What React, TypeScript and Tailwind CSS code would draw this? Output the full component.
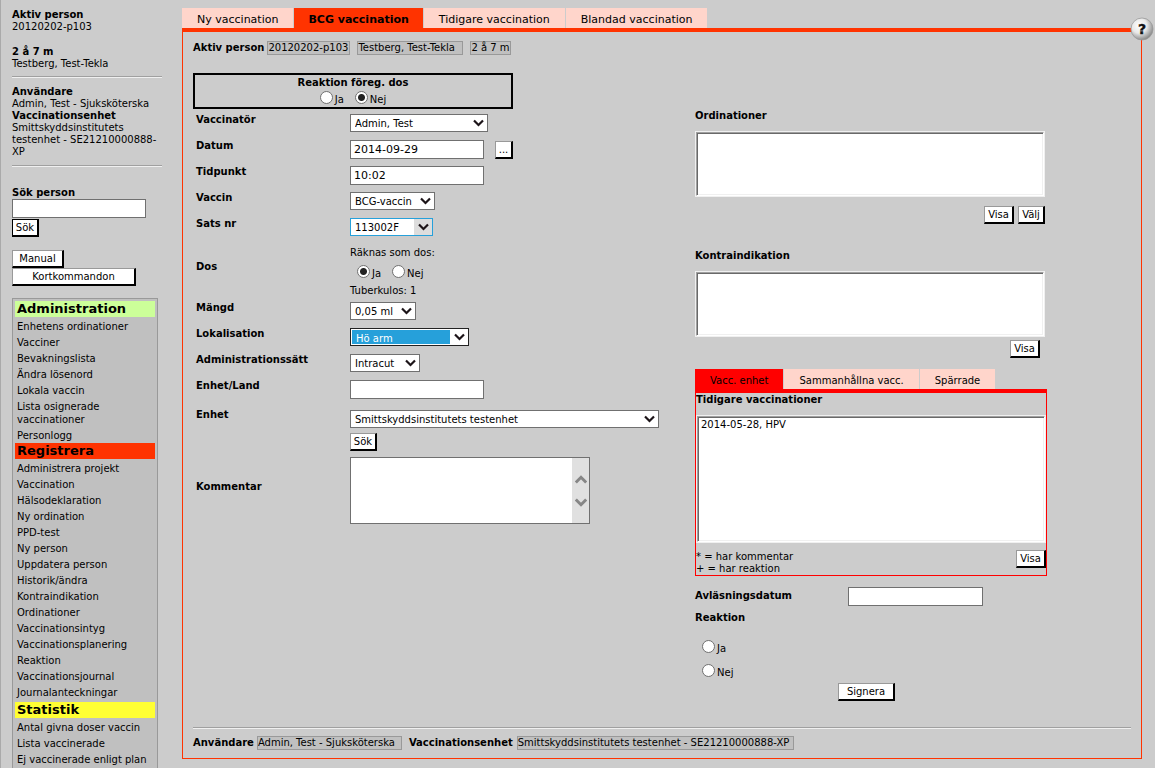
import React, { useState } from "react";

const cx = (...parts: (string | false | undefined)[]) => parts.filter(Boolean).join(" ");

const adminLinks = [
  "Enhetens ordinationer",
  "Vacciner",
  "Bevakningslista",
  "Ändra lösenord",
  "Lokala vaccin",
  "Lista osignerade vaccinationer",
  "Personlogg",
];

const registerLinks = [
  "Administrera projekt",
  "Vaccination",
  "Hälsodeklaration",
  "Ny ordination",
  "PPD-test",
  "Ny person",
  "Uppdatera person",
  "Historik/ändra",
  "Kontraindikation",
  "Ordinationer",
  "Vaccinationsintyg",
  "Vaccinationsplanering",
  "Reaktion",
  "Vaccinationsjournal",
  "Journalanteckningar",
];

const statisticsLinks = ["Antal givna doser vaccin", "Lista vaccinerade", "Ej vaccinerade enligt plan"];

function Button({ children, className }: { children: React.ReactNode; className?: string }) {
  return (
    <button
      type="button"
      className={cx(
        "flex h-[18px] items-center justify-center border-t border-l border-r-2 border-b-2 border-t-[#999] border-l-[#999] border-r-black border-b-black bg-white whitespace-nowrap",
        className,
      )}
    >
      {children}
    </button>
  );
}

function TextInput({ id, value, className }: { id: string; value?: string; className?: string }) {
  return (
    <input
      id={id}
      type="text"
      defaultValue={value}
      className={cx("h-[19px] border border-[#707070] bg-white px-[3px] text-[11px] outline-none", className ?? "w-[134px]")}
    />
  );
}

function Chevron() {
  return (
    <svg width="11" height="8" viewBox="0 0 11 8" aria-hidden="true">
      <path d="M1 1.5 L5.5 6 L10 1.5" fill="none" stroke="#1c1418" strokeWidth="2.2" />
    </svg>
  );
}

function Select({
  id,
  value,
  width,
  frame = "border-[#707070]",
  field = "bg-white",
  arrow = "bg-white",
}: {
  id: string;
  value: string;
  width: string;
  frame?: string;
  field?: string;
  arrow?: string;
}) {
  return (
    <div className={cx("relative h-[18px] border bg-white", width, frame)}>
      <select id={id} className={cx("block h-full w-full appearance-none pt-0.5 pl-1 leading-[14px] outline-none", field)}>
        <option>{value}</option>
      </select>
      <span className={cx("pointer-events-none absolute inset-y-0 right-0 flex w-[18px] items-center justify-center", arrow)}>
        <Chevron />
      </span>
    </div>
  );
}

function Radio({ name, label, checked }: { name: string; label: string; checked?: boolean }) {
  return (
    <label className="flex items-start gap-0.5">
      <input
        type="radio"
        name={name}
        defaultChecked={checked}
        className="size-[13px] shrink-0 appearance-none rounded-full border border-[#707070] bg-white checked:bg-[radial-gradient(circle,#222_3px,white_4px)]"
      />
      <span className="pt-[3px] leading-3">{label}</span>
    </label>
  );
}

function ListBox({ id, height, items = [] }: { id: string; height: string; items?: string[] }) {
  return (
    <div className="border border-[#f0f0f0]">
      <select
        id={id}
        size={4}
        className={cx(
          "block w-full overflow-hidden border border-t-[#a0a0a0] border-r-white border-b-white border-l-[#a0a0a0] bg-white py-0.5 pl-[3px] shadow-[inset_1px_1px_0_#696969,inset_-1px_-1px_0_#f0f0f0] outline-none",
          height,
        )}
      >
        {items.map((item) => (
          <option key={item} className="p-0 leading-3">
            {item}
          </option>
        ))}
      </select>
    </div>
  );
}

function Row({ id, label, children, className }: { id: string; label: string; children: React.ReactNode; className?: string }) {
  return (
    <div className={cx("flex items-start", className ?? "h-[26px]")}>
      <label htmlFor={id} className="w-[154px] shrink-0 pt-px font-bold">
        {label}
      </label>
      <div className="pt-px">{children}</div>
    </div>
  );
}

function Tag({ children, className }: { children: React.ReactNode; className?: string }) {
  return <span className={cx("border border-[#999] bg-[#c0c0c0] leading-3 whitespace-nowrap", className)}>{children}</span>;
}

function Rule() {
  return <hr className="h-0.5 border-t border-b border-t-[#a0a0a0] border-b-[#f0f0f0]" />;
}

function MenuSection({ title, color, links, className }: { title: string; color: string; links: string[]; className?: string }) {
  return (
    <section className={className}>
      <h2 className={cx("h-4 px-0.5 text-[13px] leading-4 font-bold", color)}>{title}</h2>
      <ul className="px-0.5 pt-px">
        {links.map((link) => (
          <li key={link} className="pt-0.5 pb-px leading-[13px]">
            <a href="#" className="block">
              {link}
            </a>
          </li>
        ))}
      </ul>
    </section>
  );
}

function Sidebar() {
  return (
    <aside className="flex w-[182px] shrink-0 flex-col border-l border-[#aaa] pt-[9px] pl-[11px]">
      <div className="w-[150px]">
        <p className="font-bold">Aktiv person</p>
        <p>20120202-p103</p>
        <p className="pt-[13px] font-bold">2 å 7 m</p>
        <p className="pb-1.5">Testberg, Test-Tekla</p>
        <Rule />
        <p className="pt-2 font-bold">Användare</p>
        <p className="whitespace-nowrap">Admin, Test - Sjuksköterska</p>
        <p className="font-bold">Vaccinationsenhet</p>
        <p className="pb-[7px]">Smittskyddsinstitutets testenhet - SE21210000888-XP</p>
        <Rule />
        <label htmlFor="search" className="block pt-5 font-bold">
          Sök person
        </label>
        <TextInput id="search" className="block w-[134px]" />
        <Button className="mt-px w-[27px] outline outline-1 -outline-offset-1 outline-black">Sök</Button>
        <Button className="mt-[13px] w-[52px]">Manual</Button>
        <Button className="w-[124px]">Kortkommandon</Button>
      </div>
      <nav className="mt-3 w-[146px] grow border border-b-0 border-[#999] bg-[#c0c0c0] p-0.5 pb-0">
        <MenuSection title="Administration" color="bg-[#cf9]" links={adminLinks} />
        <MenuSection title="Registrera" color="bg-[#f30]" links={registerLinks} className="pb-0.5" />
        <MenuSection title="Statistik" color="bg-[#ff3]" links={statisticsLinks} />
      </nav>
    </aside>
  );
}

function MainTabs() {
  const [active, setActive] = useState("BCG vaccination");
  return (
    <div className="flex gap-px text-[11px]">
      {["Ny vaccination", "BCG vaccination", "Tidigare vaccination", "Blandad vaccination"].map((tab) => (
        <button
          key={tab}
          type="button"
          onClick={() => setActive(tab)}
          className={cx(
            "h-5 pt-1 leading-4 whitespace-nowrap",
            tab === active ? "bg-[#f30] px-3.5 font-bold" : "bg-[#ffd5cb] px-[15px]",
          )}
        >
          {tab}
        </button>
      ))}
    </div>
  );
}

function VaccinationForm() {
  return (
    <div className="w-[502px] shrink-0">
      <fieldset className="flex h-9 w-[320px] flex-col items-center border-2 border-black">
        <span className="pt-0.5 font-bold">Reaktion föreg. dos</span>
        <div className="flex gap-[11px] pt-0.5">
          <Radio name="previous-reaction" label="Ja" />
          <Radio name="previous-reaction" label="Nej" checked />
        </div>
      </fieldset>
      <div className="pt-1 pl-[3px]">
        <Row id="vaccinator" label="Vaccinatör">
          <Select id="vaccinator" value="Admin, Test" width="w-[138px]" />
        </Row>
        <Row id="date" label="Datum">
          <div className="flex items-start gap-[11px]">
            <TextInput id="date" value="2014-09-29" />
            <Button className="mt-px w-[18px]">...</Button>
          </div>
        </Row>
        <Row id="time" label="Tidpunkt">
          <TextInput id="time" value="10:02" />
        </Row>
        <Row id="vaccine" label="Vaccin">
          <Select id="vaccine" value="BCG-vaccin" width="w-[85px]" />
        </Row>
        <Row id="batch" label="Sats nr">
          <Select id="batch" value="113002F" width="w-[83px]" frame="border-[#26a0da]" arrow="bg-[#ddd]" />
        </Row>
        <div className="flex h-[58px] items-start" role="radiogroup" aria-label="Dos">
          <span className="w-[154px] shrink-0 pt-[18px] font-bold">Dos</span>
          <div className="pt-1">
            <p>Räknas som dos:</p>
            <div className="flex gap-[11px] pt-1.5 pb-[5px] pl-[7px]">
              <Radio name="dose" label="Ja" checked />
              <Radio name="dose" label="Nej" />
            </div>
            <p>Tuberkulos: 1</p>
          </div>
        </div>
        <Row id="amount" label="Mängd">
          <Select id="amount" value="0,05 ml" width="w-[66px]" />
        </Row>
        <Row id="site" label="Lokalisation">
          <Select id="site" value="Hö arm" width="w-[119px]" frame="border-[#222] p-px" field="bg-[#26a0da] text-white" />
        </Row>
        <Row id="route" label="Administrationssätt">
          <Select id="route" value="Intracut" width="w-[70px]" />
        </Row>
        <Row id="unit-country" label="Enhet/Land" className="h-[29px]">
          <TextInput id="unit-country" />
        </Row>
        <Row id="unit" label="Enhet" className="h-[49px]">
          <div className="flex flex-col gap-[5px] pt-px">
            <Select id="unit" value="Smittskyddsinstitutets testenhet" width="w-[309px]" />
            <Button className="w-[27px]">Sök</Button>
          </div>
        </Row>
        <div className="flex items-center">
          <label htmlFor="comment" className="w-[154px] shrink-0 pb-2 font-bold">
            Kommentar
          </label>
          <div className="flex h-[67px] w-[240px] border border-[#707070] bg-white">
            <textarea id="comment" className="min-w-0 grow resize-none px-0.5 outline-none" />
            <div className="flex w-[17px] flex-col items-center justify-center gap-3.5 bg-[#e0e0e0]">
              <svg width="12" height="9" viewBox="0 0 12 9" aria-hidden="true">
                <path d="M0.8 7.5 L6 2.3 L11.2 7.5" fill="none" stroke="#868686" strokeWidth="3" />
              </svg>
              <svg width="12" height="9" viewBox="0 0 12 9" aria-hidden="true">
                <path d="M0.8 1.5 L6 6.7 L11.2 1.5" fill="none" stroke="#868686" strokeWidth="3" />
              </svg>
            </div>
          </div>
        </div>
      </div>
    </div>
  );
}

function EarlierVaccinations() {
  const [active, setActive] = useState("Vacc. enhet");
  return (
    <section className="w-[352px] pt-[11px]">
      <div className="flex gap-px">
        {["Vacc. enhet", "Sammanhållna vacc.", "Spärrade"].map((tab) => (
          <button
            key={tab}
            type="button"
            onClick={() => setActive(tab)}
            className={cx("h-5 px-[15px] pt-1 leading-4 whitespace-nowrap", tab === active ? "bg-[red]" : "bg-[#ffd5cb]")}
          >
            {tab}
          </button>
        ))}
      </div>
      <div className="border border-t-4 border-[red]">
        <label htmlFor="earlier" className="block pt-px pb-[9px] font-bold">
          Tidigare vaccinationer
        </label>
        <ListBox id="earlier" height="h-[126px]" items={["2014-05-28, HPV"]} />
        <div className="flex items-start justify-between pt-[7px]">
          <div className="pt-px">
            <p>* = har kommentar</p>
            <p>+ = har reaktion</p>
          </div>
          <Button className="w-[30px]">Visa</Button>
        </div>
      </div>
    </section>
  );
}

function History() {
  return (
    <div className="w-[352px] pt-[37px]">
      <div className="w-[350px]">
        <label htmlFor="prescriptions" className="block pb-[9px] font-bold">
          Ordinationer
        </label>
        <ListBox id="prescriptions" height="h-16" />
        <div className="flex justify-end gap-1 pt-[9px] pb-[26px]">
          <Button className="w-[30px]">Visa</Button>
          <Button className="w-[27px]">Välj</Button>
        </div>
        <label htmlFor="contraindications" className="block pb-[9px] font-bold">
          Kontraindikation
        </label>
        <ListBox id="contraindications" height="h-16" />
        <div className="flex justify-end pt-[3px] pr-[5px]">
          <Button className="w-[30px]">Visa</Button>
        </div>
      </div>
      <EarlierVaccinations />
      <div className="flex items-start pt-[11px]">
        <label htmlFor="reading-date" className="w-[153px] pt-[3px] font-bold">
          Avläsningsdatum
        </label>
        <TextInput id="reading-date" className="w-[135px]" />
      </div>
      <p className="pt-1.5 font-bold">Reaktion</p>
      <div className="flex flex-col items-start gap-[9px] pt-4 pl-[7px]">
        <Radio name="reaction" label="Ja" />
        <Radio name="reaction" label="Nej" />
      </div>
      <Button className="mt-1 ml-[143px] w-[57px]">Signera</Button>
    </div>
  );
}

function HelpButton() {
  return (
    <button type="button" aria-label="Hjälp" className="absolute -top-[15px] -right-[13px] size-6">
      <svg width="24" height="24" viewBox="0 0 24 24" aria-hidden="true">
        <defs>
          <radialGradient id="ball" cx="0.38" cy="0.35" r="0.68">
            <stop offset="0" stopColor="#fff" />
            <stop offset="0.5" stopColor="#e8e8e8" />
            <stop offset="1" stopColor="#858585" />
          </radialGradient>
        </defs>
        <circle cx="12" cy="12" r="11" fill="url(#ball)" stroke="#999" strokeWidth="0.8" />
        <text x="12" y="17" textAnchor="middle" fontSize="14" fontWeight="bold" fill="#111" stroke="#111" strokeWidth="0.4">
          ?
        </text>
      </svg>
    </button>
  );
}

export default function App() {
  return (
    <div className="flex min-h-screen bg-[#ccc] font-['Verdana','DejaVu_Sans',sans-serif] text-[10px] leading-3 text-black">
      <Sidebar />
      <main className="min-w-0 grow pt-2 pr-[13px]">
        <MainTabs />
        <div className="relative border border-t-4 border-[#f30] px-2.5 pt-[9px] pb-2">
          <HelpButton />
          <div className="flex items-center pb-[18px]">
            <span className="pr-[3px] font-bold">Aktiv person</span>
            <div className="flex gap-[7px]">
              <Tag className="min-w-[83px]">20120202-p103</Tag>
              <Tag className="min-w-[106px]">Testberg, Test-Tekla</Tag>
              <Tag className="min-w-[41px]">2 å 7 m</Tag>
            </div>
          </div>
          <div className="flex items-start pb-[26px]">
            <VaccinationForm />
            <History />
          </div>
          <Rule />
          <footer className="flex items-center pt-[7px]">
            <span className="pr-[3px] font-bold">Användare</span>
            <Tag className="min-w-[145px]">Admin, Test - Sjuksköterska</Tag>
            <span className="pr-1 pl-[7px] font-bold">Vaccinationsenhet</span>
            <Tag className="min-w-[277px]">Smittskyddsinstitutets testenhet - SE21210000888-XP</Tag>
          </footer>
        </div>
      </main>
    </div>
  );
}
